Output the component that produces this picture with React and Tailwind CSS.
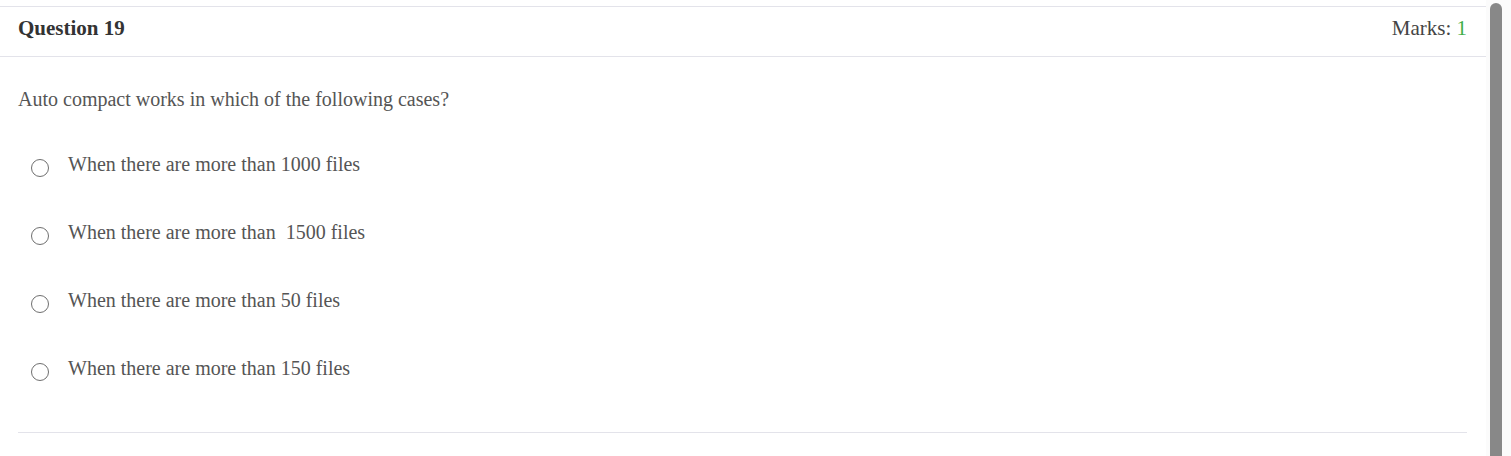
import React from "react";

const options = [
  "When there are more than 1000 files",
  "When there are more than \u00a01500 files",
  "When there are more than 50 files",
  "When there are more than 150 files",
];

export default function App() {
  return (
    <div className="flex h-[456px] w-[1511px] overflow-hidden bg-white font-['Liberation_Serif',serif]">
      <div className="w-[1486px] pt-[6px]">
        {/* header */}
        <div className="flex h-[51px] items-center justify-between border-y border-[#e3e3ea] pb-[6px] pl-[18px] pr-[19px]">
          <span className="text-[21px] font-bold text-[#333]">Question 19</span>
          <span className="text-[21px] text-[#444]">
            Marks: <span className="text-[#3fae49]">1</span>
          </span>
        </div>

        {/* body */}
        <div className="px-[18px]">
          <p className="mt-[30px] text-[20px] leading-[24px] text-[#555]">
            Auto compact works in which of the following cases?
          </p>

          <div className="mt-[41px] flex flex-col gap-[44px]">
            {options.map((o, i) => (
              <label key={i} className="flex h-[24px] items-center">
                <span className="ml-[13px] mt-[8px] h-[18px] w-[18px] rounded-full border-[1.5px] border-[#6f6f6f]" />
                <span className="ml-[19px] text-[20px] leading-[24px] text-[#555]">{o}</span>
              </label>
            ))}
          </div>

          <div className="mr-[1px] mt-[52px] border-t border-[#e3e3ea]" />
        </div>
      </div>

      {/* scrollbar */}
      <div className="w-[25px] bg-[#fbfbfb] pl-[4px] pt-[3px]">
        <div className="h-[460px] w-[12px] rounded-t-[6px] bg-[#888]" />
      </div>
    </div>
  );
}
